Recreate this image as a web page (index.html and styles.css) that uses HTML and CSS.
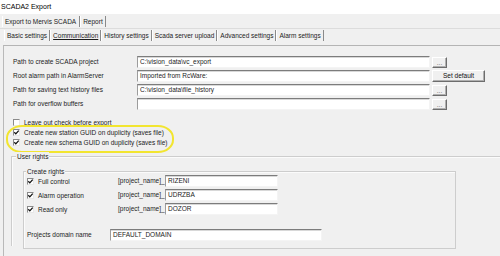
FILE: index.html
```html
<!DOCTYPE html>
<html>
<head>
<meta charset="utf-8">
<link rel="stylesheet" href="styles.css">
</head>
<body>
<div class="title">SCADA2 Export</div>
<div class="tabs outer">
  <span class="tab sel">Export to Mervis SCADA</span>
  <span class="tab">Report</span>
</div>
<div class="tabs inner">
  <span class="tab sel">Basic settings</span>
  <span class="tab"><u>Communication</u></span>
  <span class="tab">History settings</span>
  <span class="tab">Scada server upload</span>
  <span class="tab">Advanced settings</span>
  <span class="tab">Alarm settings</span>
</div>
<div class="panel">
  <div class="paths">
    <span class="lbl">Path to create SCADA project</span>
    <span class="input">C:\vision_data\vc_export</span>
    <span class="btn dots">...</span>
    <span class="lbl">Root alarm path in AlarmServer</span>
    <span class="input">Imported from RcWare:</span>
    <span class="btn wide">Set default</span>
    <span class="lbl">Path for saving text history files</span>
    <span class="input">C:\vision_data\file_history</span>
    <span class="btn dots">...</span>
    <span class="lbl">Path for overflow buffers</span>
    <span class="input"></span>
    <span class="btn dots">...</span>
  </div>
  <div class="checks">
    <div class="chk"><span class="box"></span>Leave out check before export</div>
    <div class="chk"><span class="box"><svg viewBox="0 0 7 7" width="7" height="7"><path d="M1.3 3.3 L2.8 4.9 L5.7 1.6" fill="none" stroke="#111" stroke-width="1.3"/></svg></span>Create new station GUID on duplicity (saves file)</div>
    <div class="chk"><span class="box"><svg viewBox="0 0 7 7" width="7" height="7"><path d="M1.3 3.3 L2.8 4.9 L5.7 1.6" fill="none" stroke="#111" stroke-width="1.3"/></svg></span>Create new schema GUID on duplicity (saves file)</div>
    <div class="highlight"></div>
  </div>
  <div class="group user">
    <span class="legend">User rights</span>
    <div class="group create">
      <span class="legend">Create rights</span>
      <div class="rights">
        <span class="chk"><span class="box"><svg viewBox="0 0 7 7" width="7" height="7"><path d="M1.3 3.3 L2.8 4.9 L5.7 1.6" fill="none" stroke="#111" stroke-width="1.3"/></svg></span>Full control</span>
        <span class="pn">[project_name]_</span>
        <span class="input">RIZENI</span>
        <span class="chk"><span class="box"><svg viewBox="0 0 7 7" width="7" height="7"><path d="M1.3 3.3 L2.8 4.9 L5.7 1.6" fill="none" stroke="#111" stroke-width="1.3"/></svg></span>Alarm operation</span>
        <span class="pn">[project_name]_</span>
        <span class="input">UDRZBA</span>
        <span class="chk"><span class="box"><svg viewBox="0 0 7 7" width="7" height="7"><path d="M1.3 3.3 L2.8 4.9 L5.7 1.6" fill="none" stroke="#111" stroke-width="1.3"/></svg></span>Read only</span>
        <span class="pn">[project_name]_</span>
        <span class="input">DOZOR</span>
      </div>
      <div class="domain">
        <span class="lbl">Projects domain name</span>
        <span class="input">DEFAULT_DOMAIN</span>
      </div>
    </div>
  </div>
</div>
</body>
</html>
```
FILE: styles.css
```css
* { box-sizing: border-box; }
html, body { margin: 0; padding: 0; }
body {
  width: 500px;
  height: 256px;
  overflow: hidden;
  background: #f0f0f0;
  font-family: "Liberation Sans", Arial, sans-serif;
  font-size: 6.5px;
  color: #1c1c1c;
}
.title {
  height: 14px;
  line-height: 14px;
  background: #fff;
  padding-left: 1px;
  font-size: 7px;
  color: #000;
}
.tabs {
  display: flex;
  align-items: flex-start;
}
.tabs.outer {
  height: 15px;
  padding-top: 2px;
  padding-left: 2px;
  border-bottom: 1px solid #dcdcdc;
}
.tabs.inner {
  height: 16px;
  padding-top: 1px;
  padding-left: 4px;
}
.tab {
  height: 11px;
  line-height: 11px;
  padding: 0 2px;
  border-right: 1px solid #8a8a8a;
  border-left: 1px solid #ffffff;
  white-space: nowrap;
}
.tabs.outer .tab.sel { padding-right: 3px; }
.tab u { text-decoration: underline; }
.panel {
  margin-left: 3px;
  border-top: 1px solid #b4b4b4;
  border-left: 1px solid #b9b9b9;
  height: 211px;
  padding-top: 10px;
}
.paths {
  display: grid;
  grid-template-columns: 124px 293px auto;
  grid-auto-rows: 12px;
  row-gap: 2px;
  padding-left: 9px;
  align-items: center;
  justify-items: start;
}
.lbl { line-height: 12px; white-space: nowrap; }
.input {
  display: block;
  width: 100%;
  height: 12px;
  background: #fff;
  border-top: 1px solid #7c7c7c;
  border-left: 1px solid #9c9c9c;
  border-right: 1px solid #f4f4f4;
  border-bottom: 1px solid #f4f4f4;
  box-shadow: inset 0 1px 0 #d8d8d8;
  padding-left: 2px;
  line-height: 10px;
  white-space: nowrap;
  overflow: hidden;
}
.btn {
  margin-left: 2px;
  height: 11px;
  background: #f0f0f0;
  border-top: 1px solid #fff;
  border-left: 1px solid #fff;
  border-right: 1px solid #6d6d6d;
  border-bottom: 1px solid #6d6d6d;
  box-shadow: inset -1px -1px 0 #b0b0b0;
  text-align: center;
  line-height: 9px;
}
.btn.dots { width: 15px; color: #6a6a6a; font-size: 6.5px; line-height: 10px; }
.btn.wide { width: 53px; height: 12px; line-height: 10px; color: #111; }
.checks {
  position: relative;
  margin-top: 7px;
  padding-left: 9px;
}
.chk {
  display: flex;
  align-items: center;
  height: 10px;
  white-space: nowrap;
}
.box {
  display: inline-block;
  width: 7px;
  height: 7px;
  margin-right: 4px;
  background: #fff;
  border-top: 1px solid #8a8a8a;
  border-left: 1px solid #8a8a8a;
  border-right: 1px solid #e8e8e8;
  border-bottom: 1px solid #e8e8e8;
  position: relative;
  flex: none;
}
.box svg {
  position: absolute;
  left: -1px;
  top: -1px;
}
.highlight {
  position: absolute;
  left: 2px;
  top: 8px;
  width: 168px;
  height: 28px;
  border: 2px solid #f2e530;
  border-radius: 16px / 13px;
  pointer-events: none;
}
.group {
  position: relative;
  border: 1px solid #cdcdcd;
  box-shadow: inset 1px 1px 0 #fbfbfb;
}
.group .legend {
  position: absolute;
  top: -5px;
  line-height: 9px;
  padding: 0 1px;
  background: #f0f0f0;
  white-space: nowrap;
}
.user {
  margin-top: 9px;
  margin-left: 7px;
  width: 489px;
  height: 90px;
  border-right: none;
  border-bottom: none;
  padding-top: 14px;
  padding-left: 11px;
}
.user > .legend { left: 4px; }
.create {
  width: 433px;
  height: 78px;
  padding-top: 3px;
  padding-left: 3px;
}
.create > .legend { left: 2px; }
.rights {
  display: grid;
  grid-template-columns: 91px 47px 113px;
  grid-auto-rows: 12px;
  row-gap: 2px;
  align-items: center;
}
.rights .chk { height: 12px; }
.pn { white-space: nowrap; line-height: 12px; }
.domain {
  display: grid;
  grid-template-columns: 83px 212px;
  height: 12px;
  margin-top: 14px;
  align-items: center;
}
```
